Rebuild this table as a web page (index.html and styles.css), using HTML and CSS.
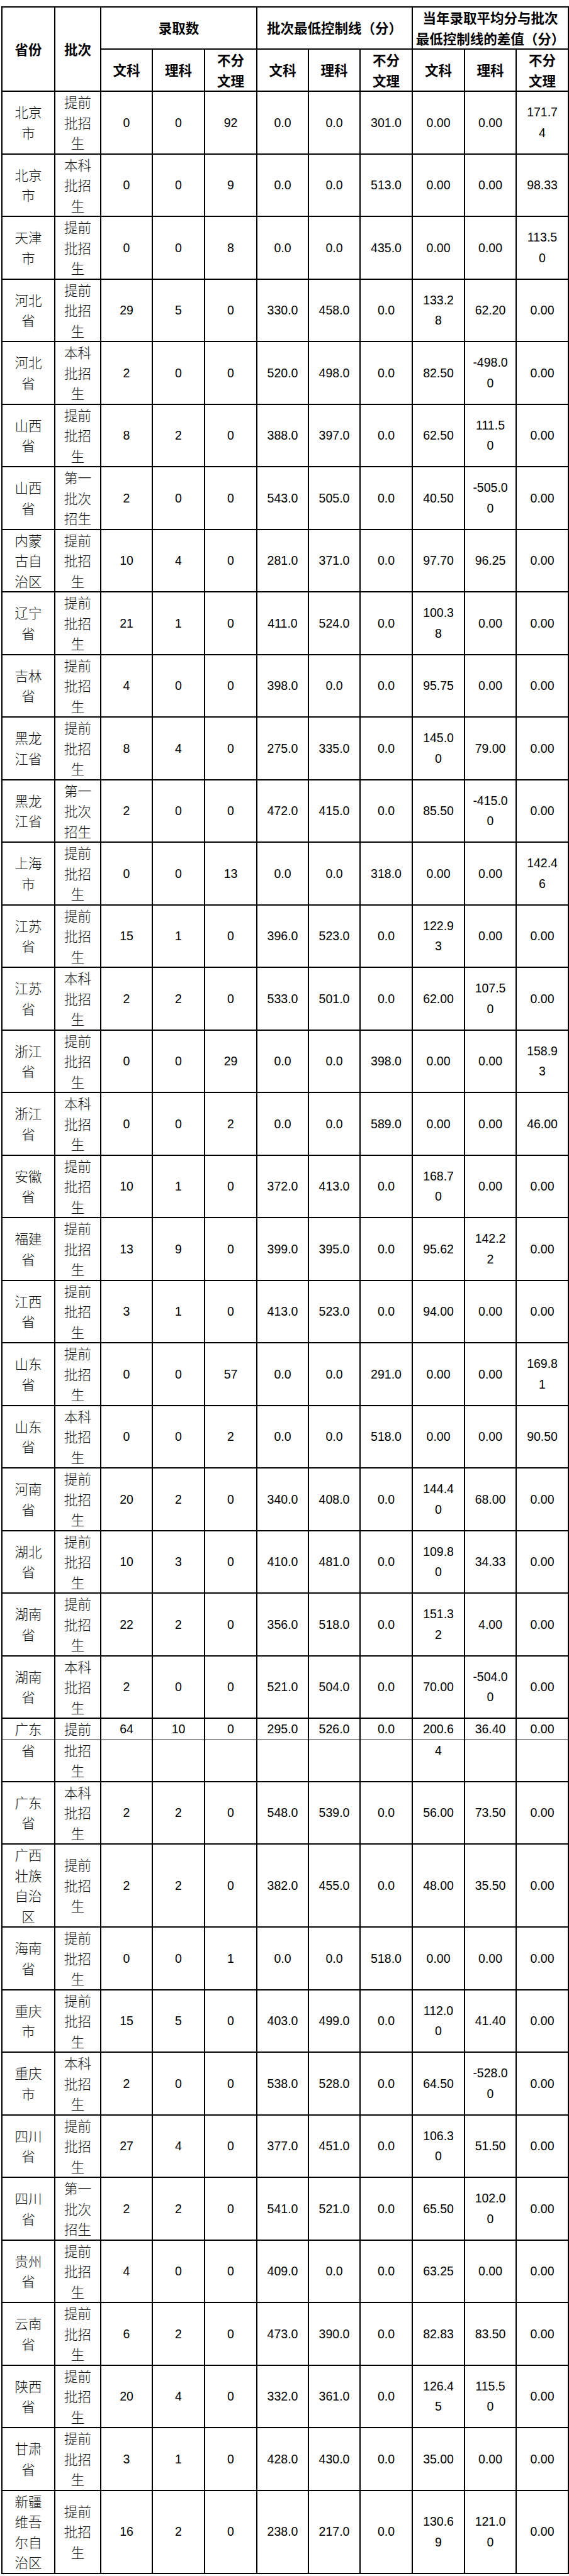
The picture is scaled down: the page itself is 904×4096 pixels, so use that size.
FILE: index.html
```html
<!DOCTYPE html>
<html lang="zh-CN">
<head>
<meta charset="utf-8">
<title>录取统计</title>
<link rel="stylesheet" href="styles.css">
</head>
<body>
<div class="page">
<table class="grid">
<colgroup>
<col class="w84"><col class="w73"><col class="w82"><col class="w83"><col class="w83"><col class="w82"><col class="w82"><col class="w83"><col class="w83"><col class="w82"><col class="w83">
</colgroup>
<thead>
<tr>
<th rowspan="2">省份</th>
<th rowspan="2">批次</th>
<th colspan="3">录取数</th>
<th colspan="3">批次最低控制线（分）</th>
<th colspan="3">当年录取平均分与批次<br>最低控制线的差值（分）</th>
</tr>
<tr>
<th>文科</th><th>理科</th><th>不分<br>文理</th>
<th>文科</th><th>理科</th><th>不分<br>文理</th>
<th>文科</th><th>理科</th><th>不分<br>文理</th>
</tr>
</thead>
<tbody>
<tr><td class="z">北京<br>市</td><td class="z">提前<br>批招<br>生</td><td>0</td><td>0</td><td>92</td><td>0.0</td><td>0.0</td><td>301.0</td><td>0.00</td><td>0.00</td><td>171.7<br>4</td></tr>
<tr><td class="z">北京<br>市</td><td class="z">本科<br>批招<br>生</td><td>0</td><td>0</td><td>9</td><td>0.0</td><td>0.0</td><td>513.0</td><td>0.00</td><td>0.00</td><td>98.33</td></tr>
<tr><td class="z">天津<br>市</td><td class="z">提前<br>批招<br>生</td><td>0</td><td>0</td><td>8</td><td>0.0</td><td>0.0</td><td>435.0</td><td>0.00</td><td>0.00</td><td>113.5<br>0</td></tr>
<tr><td class="z">河北<br>省</td><td class="z">提前<br>批招<br>生</td><td>29</td><td>5</td><td>0</td><td>330.0</td><td>458.0</td><td>0.0</td><td>133.2<br>8</td><td>62.20</td><td>0.00</td></tr>
<tr><td class="z">河北<br>省</td><td class="z">本科<br>批招<br>生</td><td>2</td><td>0</td><td>0</td><td>520.0</td><td>498.0</td><td>0.0</td><td>82.50</td><td>-498.0<br>0</td><td>0.00</td></tr>
<tr><td class="z">山西<br>省</td><td class="z">提前<br>批招<br>生</td><td>8</td><td>2</td><td>0</td><td>388.0</td><td>397.0</td><td>0.0</td><td>62.50</td><td>111.5<br>0</td><td>0.00</td></tr>
<tr><td class="z">山西<br>省</td><td class="z">第一<br>批次<br>招生</td><td>2</td><td>0</td><td>0</td><td>543.0</td><td>505.0</td><td>0.0</td><td>40.50</td><td>-505.0<br>0</td><td>0.00</td></tr>
<tr><td class="z">内蒙<br>古自<br>治区</td><td class="z">提前<br>批招<br>生</td><td>10</td><td>4</td><td>0</td><td>281.0</td><td>371.0</td><td>0.0</td><td>97.70</td><td>96.25</td><td>0.00</td></tr>
<tr><td class="z">辽宁<br>省</td><td class="z">提前<br>批招<br>生</td><td>21</td><td>1</td><td>0</td><td>411.0</td><td>524.0</td><td>0.0</td><td>100.3<br>8</td><td>0.00</td><td>0.00</td></tr>
<tr><td class="z">吉林<br>省</td><td class="z">提前<br>批招<br>生</td><td>4</td><td>0</td><td>0</td><td>398.0</td><td>0.0</td><td>0.0</td><td>95.75</td><td>0.00</td><td>0.00</td></tr>
<tr><td class="z">黑龙<br>江省</td><td class="z">提前<br>批招<br>生</td><td>8</td><td>4</td><td>0</td><td>275.0</td><td>335.0</td><td>0.0</td><td>145.0<br>0</td><td>79.00</td><td>0.00</td></tr>
<tr><td class="z">黑龙<br>江省</td><td class="z">第一<br>批次<br>招生</td><td>2</td><td>0</td><td>0</td><td>472.0</td><td>415.0</td><td>0.0</td><td>85.50</td><td>-415.0<br>0</td><td>0.00</td></tr>
<tr><td class="z">上海<br>市</td><td class="z">提前<br>批招<br>生</td><td>0</td><td>0</td><td>13</td><td>0.0</td><td>0.0</td><td>318.0</td><td>0.00</td><td>0.00</td><td>142.4<br>6</td></tr>
<tr><td class="z">江苏<br>省</td><td class="z">提前<br>批招<br>生</td><td>15</td><td>1</td><td>0</td><td>396.0</td><td>523.0</td><td>0.0</td><td>122.9<br>3</td><td>0.00</td><td>0.00</td></tr>
<tr><td class="z">江苏<br>省</td><td class="z">本科<br>批招<br>生</td><td>2</td><td>2</td><td>0</td><td>533.0</td><td>501.0</td><td>0.0</td><td>62.00</td><td>107.5<br>0</td><td>0.00</td></tr>
<tr><td class="z">浙江<br>省</td><td class="z">提前<br>批招<br>生</td><td>0</td><td>0</td><td>29</td><td>0.0</td><td>0.0</td><td>398.0</td><td>0.00</td><td>0.00</td><td>158.9<br>3</td></tr>
<tr><td class="z">浙江<br>省</td><td class="z">本科<br>批招<br>生</td><td>0</td><td>0</td><td>2</td><td>0.0</td><td>0.0</td><td>589.0</td><td>0.00</td><td>0.00</td><td>46.00</td></tr>
<tr><td class="z">安徽<br>省</td><td class="z">提前<br>批招<br>生</td><td>10</td><td>1</td><td>0</td><td>372.0</td><td>413.0</td><td>0.0</td><td>168.7<br>0</td><td>0.00</td><td>0.00</td></tr>
<tr><td class="z">福建<br>省</td><td class="z">提前<br>批招<br>生</td><td>13</td><td>9</td><td>0</td><td>399.0</td><td>395.0</td><td>0.0</td><td>95.62</td><td>142.2<br>2</td><td>0.00</td></tr>
<tr><td class="z">江西<br>省</td><td class="z">提前<br>批招<br>生</td><td>3</td><td>1</td><td>0</td><td>413.0</td><td>523.0</td><td>0.0</td><td>94.00</td><td>0.00</td><td>0.00</td></tr>
<tr><td class="z">山东<br>省</td><td class="z">提前<br>批招<br>生</td><td>0</td><td>0</td><td>57</td><td>0.0</td><td>0.0</td><td>291.0</td><td>0.00</td><td>0.00</td><td>169.8<br>1</td></tr>
<tr><td class="z">山东<br>省</td><td class="z">本科<br>批招<br>生</td><td>0</td><td>0</td><td>2</td><td>0.0</td><td>0.0</td><td>518.0</td><td>0.00</td><td>0.00</td><td>90.50</td></tr>
<tr><td class="z">河南<br>省</td><td class="z">提前<br>批招<br>生</td><td>20</td><td>2</td><td>0</td><td>340.0</td><td>408.0</td><td>0.0</td><td>144.4<br>0</td><td>68.00</td><td>0.00</td></tr>
<tr><td class="z">湖北<br>省</td><td class="z">提前<br>批招<br>生</td><td>10</td><td>3</td><td>0</td><td>410.0</td><td>481.0</td><td>0.0</td><td>109.8<br>0</td><td>34.33</td><td>0.00</td></tr>
<tr><td class="z">湖南<br>省</td><td class="z">提前<br>批招<br>生</td><td>22</td><td>2</td><td>0</td><td>356.0</td><td>518.0</td><td>0.0</td><td>151.3<br>2</td><td>4.00</td><td>0.00</td></tr>
<tr><td class="z">湖南<br>省</td><td class="z">本科<br>批招<br>生</td><td>2</td><td>0</td><td>0</td><td>521.0</td><td>504.0</td><td>0.0</td><td>70.00</td><td>-504.0<br>0</td><td>0.00</td></tr>
<tr class="split-top"><td class="z">广东</td><td class="z">提前</td><td>64</td><td>10</td><td>0</td><td>295.0</td><td>526.0</td><td>0.0</td><td>200.6</td><td>36.40</td><td>0.00</td></tr>
<tr class="split-bottom"><td class="z">省</td><td class="z">批招<br>生</td><td></td><td></td><td></td><td></td><td></td><td></td><td>4</td><td></td><td></td></tr>
<tr><td class="z">广东<br>省</td><td class="z">本科<br>批招<br>生</td><td>2</td><td>2</td><td>0</td><td>548.0</td><td>539.0</td><td>0.0</td><td>56.00</td><td>73.50</td><td>0.00</td></tr>
<tr><td class="z">广西<br>壮族<br>自治<br>区</td><td class="z">提前<br>批招<br>生</td><td>2</td><td>2</td><td>0</td><td>382.0</td><td>455.0</td><td>0.0</td><td>48.00</td><td>35.50</td><td>0.00</td></tr>
<tr><td class="z">海南<br>省</td><td class="z">提前<br>批招<br>生</td><td>0</td><td>0</td><td>1</td><td>0.0</td><td>0.0</td><td>518.0</td><td>0.00</td><td>0.00</td><td>0.00</td></tr>
<tr><td class="z">重庆<br>市</td><td class="z">提前<br>批招<br>生</td><td>15</td><td>5</td><td>0</td><td>403.0</td><td>499.0</td><td>0.0</td><td>112.0<br>0</td><td>41.40</td><td>0.00</td></tr>
<tr><td class="z">重庆<br>市</td><td class="z">本科<br>批招<br>生</td><td>2</td><td>0</td><td>0</td><td>538.0</td><td>528.0</td><td>0.0</td><td>64.50</td><td>-528.0<br>0</td><td>0.00</td></tr>
<tr><td class="z">四川<br>省</td><td class="z">提前<br>批招<br>生</td><td>27</td><td>4</td><td>0</td><td>377.0</td><td>451.0</td><td>0.0</td><td>106.3<br>0</td><td>51.50</td><td>0.00</td></tr>
<tr><td class="z">四川<br>省</td><td class="z">第一<br>批次<br>招生</td><td>2</td><td>2</td><td>0</td><td>541.0</td><td>521.0</td><td>0.0</td><td>65.50</td><td>102.0<br>0</td><td>0.00</td></tr>
<tr><td class="z">贵州<br>省</td><td class="z">提前<br>批招<br>生</td><td>4</td><td>0</td><td>0</td><td>409.0</td><td>0.0</td><td>0.0</td><td>63.25</td><td>0.00</td><td>0.00</td></tr>
<tr><td class="z">云南<br>省</td><td class="z">提前<br>批招<br>生</td><td>6</td><td>2</td><td>0</td><td>473.0</td><td>390.0</td><td>0.0</td><td>82.83</td><td>83.50</td><td>0.00</td></tr>
<tr><td class="z">陕西<br>省</td><td class="z">提前<br>批招<br>生</td><td>20</td><td>4</td><td>0</td><td>332.0</td><td>361.0</td><td>0.0</td><td>126.4<br>5</td><td>115.5<br>0</td><td>0.00</td></tr>
<tr><td class="z">甘肃<br>省</td><td class="z">提前<br>批招<br>生</td><td>3</td><td>1</td><td>0</td><td>428.0</td><td>430.0</td><td>0.0</td><td>35.00</td><td>0.00</td><td>0.00</td></tr>
<tr><td class="z">新疆<br>维吾<br>尔自<br>治区</td><td class="z">提前<br>批招<br>生</td><td>16</td><td>2</td><td>0</td><td>238.0</td><td>217.0</td><td>0.0</td><td>130.6<br>9</td><td>121.0<br>0</td><td>0.00</td></tr>
</tbody>
</table>
</div>
</body>
</html>
```

FILE: styles.css
```css
html, body {
  margin: 0;
  padding: 0;
  background: #ffffff;
}

body {
  font-family: "Noto Sans CJK SC", "Noto Sans", sans-serif;
  color: #000000;
}

.page {
  padding: 10px 0 0 2px;
}

.grid {
  border-collapse: collapse;
  table-layout: fixed;
  width: 900px;
}

.w84 { width: 84px; }
.w73 { width: 73px; }
.w82 { width: 82px; }
.w83 { width: 83px; }

.grid th,
.grid td {
  border: 2px solid #000000;
  padding: 0;
  text-align: center;
  vertical-align: middle;
  line-height: 32.5px;
  white-space: nowrap;
}

.grid th {
  font-family: "Noto Sans CJK SC", sans-serif;
  font-size: 21.5px;
  font-weight: 700;
}

.grid td {
  font-family: "Liberation Sans", Arial, sans-serif;
  font-size: 19.5px;
  font-weight: 400;
}

.grid td.z {
  font-family: "Noto Sans CJK SC", sans-serif;
  font-size: 21.5px;
  font-weight: 300;
  color: #111111;
}

.split-top td {
  border-bottom-width: 1px;
}

.split-bottom td {
  border-top-width: 1px;
  vertical-align: top;
}
```
